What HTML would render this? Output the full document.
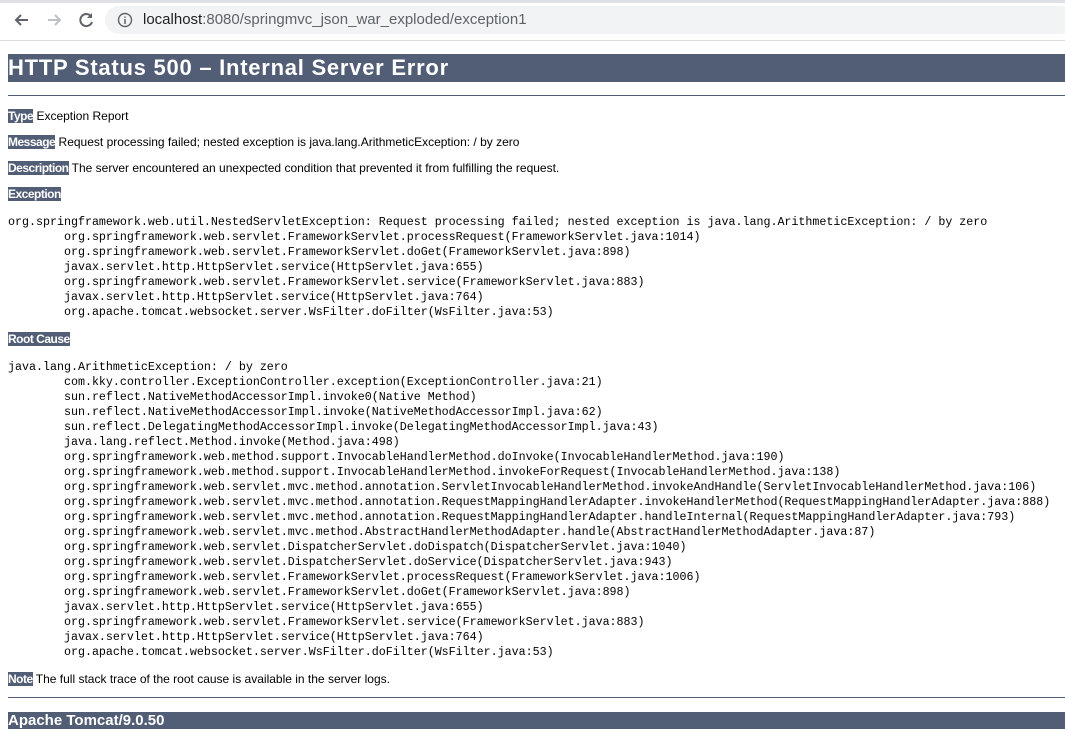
<!DOCTYPE html>
<html><head><meta charset="utf-8"><style>
*{margin:0;padding:0}
body{width:1065px;height:738px;overflow:hidden;background:#fff;position:relative;font-family:"Liberation Sans",Arial,sans-serif}
.chrome{position:absolute;left:0;top:0;width:1065px;height:40px;background:#fff;border-bottom:1px solid #dadce0}
.chrome .topline{position:absolute;left:0;top:0;width:1065px;height:3px;background:#dee1e6}
.pill{position:absolute;left:105px;top:6px;width:970px;height:28px;background:#f1f3f4;border-radius:14px}
.url{position:absolute;left:143px;top:11px;font-size:15px;color:#202124}
.url span{color:#5f6368}
.ab{position:absolute}
h1{position:absolute;left:8px;top:54px;width:1057px;height:28px;background:#525D76;color:#fff;font-size:22px;letter-spacing:0.75px;font-weight:bold;line-height:28px;white-space:nowrap}
.hr{position:absolute;left:8px;width:1057px;height:1px;background:#525D76}
.p{position:absolute;left:8px;font-size:12px;line-height:14px;color:#000;white-space:nowrap}
.p b{background:#525D76;color:#fff;font-weight:bold;letter-spacing:-0.5px}
pre{position:absolute;left:8px;font-family:"Liberation Mono",monospace;font-size:11.67px;line-height:15px;color:#000}
.foot{position:absolute;left:8px;top:712px;width:1057px;height:17px;background:#525D76;color:#fff;font-weight:bold;font-size:15px;line-height:18px}
</style></head><body>
<div class="chrome"><div class="topline"></div>
<svg class="ab" style="left:12px;top:10px" width="20" height="20" viewBox="0 0 20 20"><path d="M16 10H4M9 5l-5 5 5 5" fill="none" stroke="#5f6368" stroke-width="2"/></svg>
<svg class="ab" style="left:44px;top:10px" width="20" height="20" viewBox="0 0 20 20"><path d="M4 10h12M11 5l5 5-5 5" fill="none" stroke="#bdc1c6" stroke-width="2"/></svg>
<svg class="ab" style="left:76px;top:10px" width="20" height="20" viewBox="0 0 20 20"><path d="M15.5 7A6 6 0 1 0 16 12" fill="none" stroke="#5f6368" stroke-width="2"/><path d="M16 3v5h-5z" fill="#5f6368"/></svg>
<div class="pill"></div>
<svg class="ab" style="left:117px;top:12px" width="16" height="16" viewBox="0 0 16 16"><circle cx="8" cy="8" r="6.5" fill="none" stroke="#5f6368" stroke-width="1.4"/><path d="M8 7v5M8 4.5v1.2" stroke="#5f6368" stroke-width="1.5"/></svg>
<div class="url">localhost<span>:8080/springmvc_json_war_exploded/exception1</span></div>
</div>
<h1>HTTP Status 500 – Internal Server Error</h1>
<div class="hr" style="top:95px"></div>
<div class="p" style="top:109px"><b>Type</b> Exception Report</div>
<div class="p" style="top:135px"><b>Message</b> Request processing failed; nested exception is java.lang.ArithmeticException: / by zero</div>
<div class="p" style="top:161px"><b>Description</b> The server encountered an unexpected condition that prevented it from fulfilling the request.</div>
<div class="p" style="top:187px"><b>Exception</b></div>
<pre style="top:215px">org.springframework.web.util.NestedServletException: Request processing failed; nested exception is java.lang.ArithmeticException: / by zero
        org.springframework.web.servlet.FrameworkServlet.processRequest(FrameworkServlet.java:1014)
        org.springframework.web.servlet.FrameworkServlet.doGet(FrameworkServlet.java:898)
        javax.servlet.http.HttpServlet.service(HttpServlet.java:655)
        org.springframework.web.servlet.FrameworkServlet.service(FrameworkServlet.java:883)
        javax.servlet.http.HttpServlet.service(HttpServlet.java:764)
        org.apache.tomcat.websocket.server.WsFilter.doFilter(WsFilter.java:53)
</pre>
<div class="p" style="top:332px"><b>Root Cause</b></div>
<pre style="top:360px">java.lang.ArithmeticException: / by zero
        com.kky.controller.ExceptionController.exception(ExceptionController.java:21)
        sun.reflect.NativeMethodAccessorImpl.invoke0(Native Method)
        sun.reflect.NativeMethodAccessorImpl.invoke(NativeMethodAccessorImpl.java:62)
        sun.reflect.DelegatingMethodAccessorImpl.invoke(DelegatingMethodAccessorImpl.java:43)
        java.lang.reflect.Method.invoke(Method.java:498)
        org.springframework.web.method.support.InvocableHandlerMethod.doInvoke(InvocableHandlerMethod.java:190)
        org.springframework.web.method.support.InvocableHandlerMethod.invokeForRequest(InvocableHandlerMethod.java:138)
        org.springframework.web.servlet.mvc.method.annotation.ServletInvocableHandlerMethod.invokeAndHandle(ServletInvocableHandlerMethod.java:106)
        org.springframework.web.servlet.mvc.method.annotation.RequestMappingHandlerAdapter.invokeHandlerMethod(RequestMappingHandlerAdapter.java:888)
        org.springframework.web.servlet.mvc.method.annotation.RequestMappingHandlerAdapter.handleInternal(RequestMappingHandlerAdapter.java:793)
        org.springframework.web.servlet.mvc.method.AbstractHandlerMethodAdapter.handle(AbstractHandlerMethodAdapter.java:87)
        org.springframework.web.servlet.DispatcherServlet.doDispatch(DispatcherServlet.java:1040)
        org.springframework.web.servlet.DispatcherServlet.doService(DispatcherServlet.java:943)
        org.springframework.web.servlet.FrameworkServlet.processRequest(FrameworkServlet.java:1006)
        org.springframework.web.servlet.FrameworkServlet.doGet(FrameworkServlet.java:898)
        javax.servlet.http.HttpServlet.service(HttpServlet.java:655)
        org.springframework.web.servlet.FrameworkServlet.service(FrameworkServlet.java:883)
        javax.servlet.http.HttpServlet.service(HttpServlet.java:764)
        org.apache.tomcat.websocket.server.WsFilter.doFilter(WsFilter.java:53)
</pre>
<div class="p" style="top:672px"><b>Note</b> The full stack trace of the root cause is available in the server logs.</div>
<div class="hr" style="top:697px"></div>
<div class="foot">Apache Tomcat/9.0.50</div>
</body></html>
